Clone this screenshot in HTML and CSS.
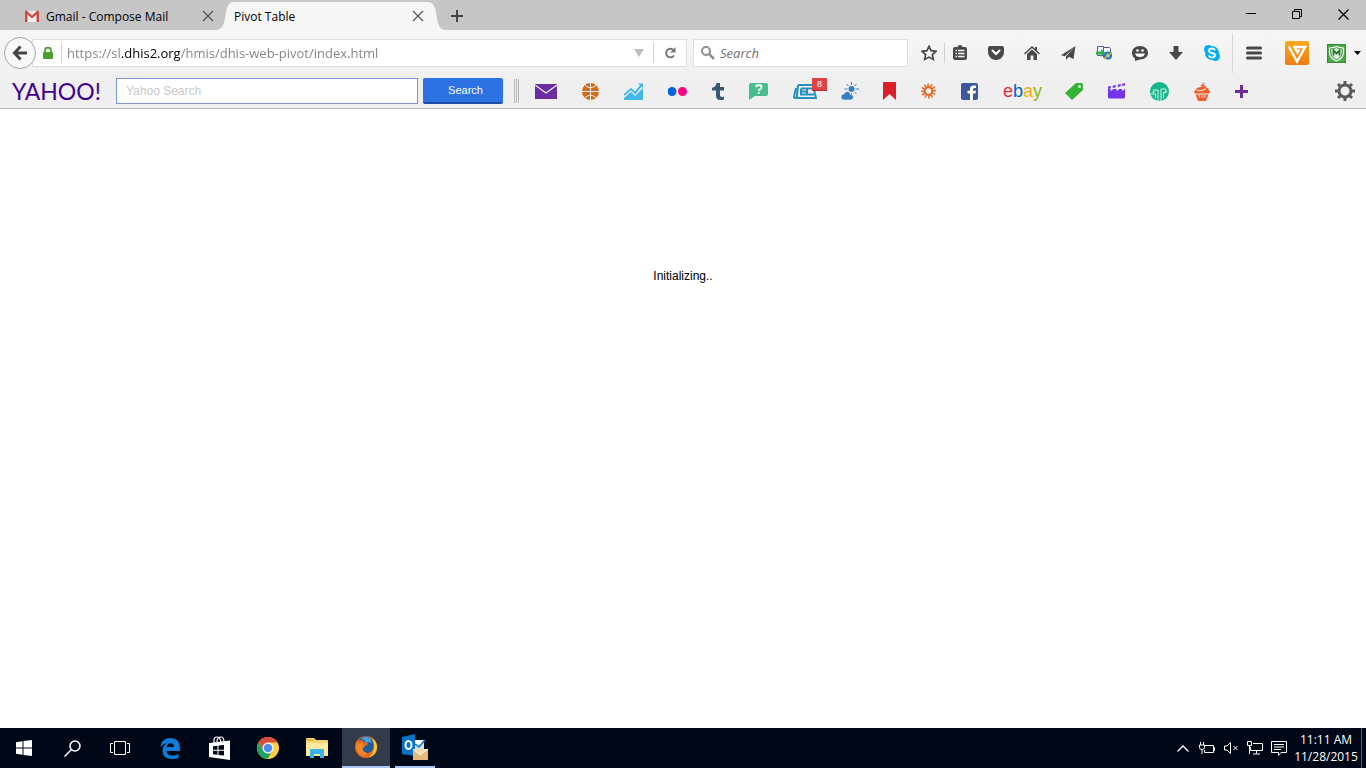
FILE: index.html
```html
<!DOCTYPE html>
<html lang="en">
<head>
    <meta charset="UTF-8">
    <meta name="viewport" content="width=device-width, initial-scale=1.0">
    <title>Pivot Table</title>
    <link rel="stylesheet" href="styles.css">
</head>
<body>
    <header class="browser">
        <div class="tab-strip">
            <div class="tab">
                <svg width="14" height="12" viewBox="0 0 14 12"><path d="M0 1h14v11H0z" fill="#f4eeee"/><path d="M0 1.500Q0 0 1.500 0.500L7 5.500 12.500 .5Q14 0 14 1.500V12h-2.500V4.500L7 8.500 2.500 4.500V12H0z" fill="#cf4b3f"/></svg>
                <button class="tab-title">Gmail - Compose Mail</button>
                <button class="close" aria-label="Close Gmail tab"><svg width="12" height="12" viewBox="0 0 12 12"><path d="M1 1l10 10M11 1L1 11" stroke="#555" stroke-width="1.200"/></svg></button>
            </div>
            <svg class="tab-edge" width="20" height="28" viewBox="0 0 20 28"><path d="M0 28C14 28 5 0 18 0h2V28z"/></svg>
            <div class="tab active">
                <button class="tab-title">Pivot Table</button>
                <button class="close" aria-label="Close Pivot Table tab"><svg width="12" height="12" viewBox="0 0 12 12"><path d="M1 1l10 10M11 1L1 11" stroke="#555" stroke-width="1.200"/></svg></button>
            </div>
            <svg class="tab-edge" width="20" height="28" viewBox="0 0 20 28"><path d="M20 28C6 28 15 0 2 0H0V28z"/></svg>
            <button class="new-tab" aria-label="New tab"><svg width="12" height="12" viewBox="0 0 12 12"><path d="M6 0v12M0 6h12" stroke="#444" stroke-width="2"/></svg></button>
            <div class="window-buttons">
                <button aria-label="Minimize"><svg width="10" height="10" viewBox="0 0 10 10"><path d="M0 4.500h10" stroke="#000"/></svg></button>
                <button aria-label="Restore"><svg width="11" height="11" viewBox="0 0 11 11" fill="none" stroke="#000"><path d="M.5 2.500h7v7h-7zM2.500 2.500v-2h7v7h-2"/></svg></button>
                <button aria-label="Close window"><svg width="11" height="11" viewBox="0 0 11 11"><path d="M.5.5l10 10M10.500.5l-10 10" stroke="#000" stroke-width="1.200"/></svg></button>
            </div>
        </div>

        <div class="nav-bar">
            <button class="back" aria-label="Back"><svg width="16" height="16" viewBox="0 0 16 16" fill="none" stroke="#444" stroke-width="3"><path d="M8.500 1.500L2.500 8l6 6.500M2.500 8H15"/></svg></button>
            <div class="url-box">
                <svg width="10" height="12" viewBox="0 0 10 12"><path d="M2 6V3.500a3 3 0 0 1 6 0V6" fill="none" stroke="#49a02c" stroke-width="1.800"/><rect y="5" width="10" height="7" rx="1" fill="#49a02c"/></svg>
                <input class="url" type="text" aria-label="Address" value="https://sl.dhis2.org/hmis/dhis-web-pivot/index.html">
                <button class="drop" aria-label="History"><svg width="10" height="8" viewBox="0 0 10 8"><path d="M0 0h10L5 8z" fill="#bdbdbd"/></svg></button>
                <button class="reload" aria-label="Reload"><svg width="12" height="12" viewBox="0 0 12 12"><path d="M9.500 3A4.300 4.300 0 1 0 10 8.500" fill="none" stroke="#777" stroke-width="2"/><path d="M11.500 0v5.500H6z" fill="#777"/></svg></button>
            </div>
            <div class="search-box">
                <svg width="14" height="14" viewBox="0 0 14 14" fill="none" stroke="#8f8f8f"><circle cx="5" cy="5" r="4" stroke-width="2"/><path d="M8 8l5 5" stroke-width="2.500"/></svg>
                <input type="text" placeholder="Search" aria-label="Search">
            </div>
            <div class="nav-icons">
                <button class="star" aria-label="Bookmark"><svg width="16" height="16" viewBox="0 0 16 16"><path d="M8 1.300l2.100 4.400 4.800.6-3.500 3.300.9 4.800L8 12.100l-4.300 2.300.9-4.800L1.100 6.300l4.800-.6z" fill="none" stroke="#484848" stroke-width="1.700"/></svg></button>
                <button aria-label="Bookmarks menu"><svg width="14" height="16" viewBox="0 0 14 16"><path d="M0 4q0-2 2-2h2.500q.5-2 2.500-2t2.500 2H12q2 0 2 2v9q0 2-2 2H2q-2 0-2-2z" fill="#484848"/><path d="M2.500 5.500h1.500M5 5.500h6.500M2.500 8.500h1.500M5 8.500h6.500M2.500 11.500h1.500M5 11.500h6.500" stroke="#f3f3f3" stroke-width="1.500"/></svg></button>
                <button aria-label="Pocket"><svg width="16" height="14" viewBox="0 0 16 14"><path d="M2 0h12q2 0 2 2v4a8 8 0 0 1-16 0V2q0-2 2-2z" fill="#484848"/><path d="M4.500 4.500L8 8l3.500-3.500" fill="none" stroke="#fff" stroke-width="2" stroke-linecap="round"/></svg></button>
                <button aria-label="Home"><svg width="16" height="14" viewBox="0 0 16 14" fill="#484848"><path d="M8 0l3 2.800V1h2v3.600l3 2.900-1 1L8 2 1 8.500l-1-1z"/><path d="M8 3.500l5 4.500v6H9.500V9.500h-3V14H3V8z"/></svg></button>
                <button aria-label="Send page"><svg width="15" height="14" viewBox="0 0 15 14" fill="#484848"><path d="M14.500 0L0 9.200l4 1zM14.500 0L5 10.500V14l2.200-2.600zM14.500 0L7 10.500l5.500 2.500z"/></svg></button>
                <button aria-label="Convert page"><svg width="17" height="14" viewBox="0 0 17 14"><path d="M1.500.5h6v9h-6z" fill="#eef5fb" stroke="#48617d"/><path d="M7.500 1.500h6l1 1v9h-7z" fill="#fff" stroke="#48617d"/><path d="M0 5.500h5V3l4.500 4L5 11V8.500H0z" fill="#35ad55"/><circle cx="12" cy="9.500" r="3" fill="#8cc6e8" stroke="#1978b5" stroke-width="2"/><path d="M8 13L16 6" stroke="#efb32d" stroke-width="1.300"/></svg></button>
                <button aria-label="Hello"><svg width="16" height="15" viewBox="0 0 16 15"><path d="M8 0c5 0 8 3 8 6.800S13 13.500 8 13.500L3 15v-2.500C1 11.500 0 9 0 6.800 0 3 3 0 8 0z" fill="#484848"/><circle cx="5.500" cy="4.500" r="1.300" fill="#fff"/><circle cx="10.500" cy="4.500" r="1.300" fill="#fff"/><path d="M3 7.500h10q-1 3.500-5 3.500T3 7.500z" fill="#fff"/></svg></button>
                <button aria-label="Downloads"><svg width="14" height="14" viewBox="0 0 14 14"><path d="M4.500 0h5v6H14l-7 8-7-8h4.500z" fill="#484848"/></svg></button>
                <button aria-label="Skype"><svg width="16" height="16" viewBox="0 0 16 16"><circle cx="8" cy="8" r="7" fill="#00aff0"/><circle cx="4.500" cy="4.500" r="4.500" fill="#00aff0"/><circle cx="11.500" cy="11.500" r="4.500" fill="#00aff0"/><path d="M11 5.300Q10 3.500 8 3.500 5 3.500 5 5.700 5 7.300 8 8t3 2.300q0 2.200-3 2.200-2.400 0-3.300-2" fill="none" stroke="#fff" stroke-width="1.800"/></svg></button>
                <button class="menu" aria-label="Menu"><svg width="16" height="14" viewBox="0 0 16 14"><path d="M1.500 2h13M1.500 7h13M1.500 12h13" stroke="#484848" stroke-width="3" stroke-linecap="round"/></svg></button>
            </div>
            <button class="vee" aria-label="Video extension"><svg width="24" height="24" viewBox="0 0 24 24"><defs><linearGradient id="orange" x2="0" y2="1"><stop stop-color="#fba91c"/><stop offset="1" stop-color="#ef7d13"/></linearGradient></defs><rect width="24" height="24" rx="2" fill="url(#orange)"/><path d="M3.800 5.500L12 20.500 20.200 6H9.500l3 5.500 1.800-3.200" fill="none" stroke="#fff" stroke-width="2.400"/></svg></button>
            <button class="shield" aria-label="Site advisor"><svg width="19" height="19" viewBox="0 0 19 19"><rect x=".5" y=".5" width="18" height="18" fill="#49a945" stroke="#358a38"/><path d="M2.500 4q4 0 7-1.500Q12.500 4 16.500 4v4q0 6-7 9-7-3-7-9z" fill="#3a963b" stroke="#fff" stroke-width="1.200"/><path d="M4.200 5.200q3 0 5.300-1.200 2.300 1.200 5.300 1.200V8q0 5-5.300 7.200Q4.200 13 4.200 8z" fill="#dff0dd"/><path d="M6.500 11.500V6.500l3 3 3-3v5" fill="none" stroke="#27772d" stroke-width="1.800"/></svg></button>
            <button aria-label="Site advisor menu"><svg width="7" height="4" viewBox="0 0 7 4"><path d="M0 0h7L3.500 4z"/></svg></button>
        </div>

        <div class="yahoo-bar">
            <a class="yahoo" href="#">YAHOO!</a>
            <form class="yahoo-form">
                <input type="text" placeholder="Yahoo Search" aria-label="Yahoo Search">
                <button type="button">Search</button>
            </form>
            <div class="grip"></div>
            <nav class="links">
                <a href="#" aria-label="Mail"><svg width="22" height="15" viewBox="0 0 22 15"><path d="M0 0h22v15H0z" fill="#6b2c9f"/><path d="M0 1l11 8 11-8" fill="none" stroke="#efefef" stroke-width="1.200"/></svg></a>
                <a href="#" aria-label="Sports"><svg width="17" height="17" viewBox="0 0 17 17"><circle cx="8.500" cy="8.500" r="8.500" fill="#d16d14"/><path d="M8.500 0v17M0 8.500h17M3 2.500q5.500 4.500 11 0M3 14.500q5.500-4.500 11 0" fill="none" stroke="#efefef"/></svg></a>
                <a href="#" aria-label="Finance"><svg width="19" height="17" viewBox="0 0 19 17"><path d="M0 17v-2l7-6 4 4 8-8v12z" fill="#43b7e8"/><path d="M0 12l7-6 4 4 7-8.500" fill="none" stroke="#43b7e8" stroke-width="2"/><path d="M14 .5h5V5z" fill="#43b7e8"/></svg></a>
                <a href="#" aria-label="Flickr"><svg width="19" height="17" viewBox="0 0 19 17"><circle cx="4" cy="8.500" r="4.500" fill="#0063dc"/><circle cx="14.500" cy="8.500" r="4.500" fill="#ff0084"/></svg></a>
                <a href="#" aria-label="Tumblr"><svg width="12" height="17" viewBox="0 0 12 17"><path d="M4.500 0H8v4h4v3.500H8v4.500q0 2 2 2 1 0 2-.6v3q-1.500.6-3.500.6-4.500 0-4.500-4.500v-5H0V4.800Q4 4 4.500 0z" fill="#3b5675"/></svg></a>
                <a href="#" aria-label="Answers"><svg width="19" height="17" viewBox="0 0 19 17"><path d="M2 0h15q2 0 2 2v9q0 2-2 2H6l-6 4V2q0-2 2-2z" fill="#46bf8b"/><path d="M7 4q.5-2 2.800-2 2.700 0 2.700 2.200 0 1.300-1.400 2Q9.800 6.800 9.800 8" fill="none" stroke="#fff" stroke-width="1.900"/><path d="M8.800 9h2v2h-2z" fill="#fff"/></svg></a>
                <a class="news" href="#" aria-label="News"><svg width="24" height="17" viewBox="0 0 24 17" fill="none" stroke="#2491bd" stroke-width="2"><path d="M5 2h15l3 13H2q-1 0-1-1L3 5M5 2L4 13q0 2-2 2M8 5.500h12M8 5.500v6h13M14 5.500v6M8 8.500h5"/></svg><span class="badge">8</span></a>
                <a class="weather" href="#" aria-label="Weather"><svg width="18" height="18" viewBox="0 0 18 18"><circle cx="10.500" cy="7" r="3" fill="#347fc2"/><path d="M10.500 0v3M10.500 11v3M3.500 7h3M14.500 7H18M5.500 2l2 2M13.500 4l2-2M13.500 10l2 2" stroke="#347fc2"/><path d="M3 18a3 3 0 0 1 0-6q1-3 4-2.500 2.500.5 2.500 3 3 0 3 2.500 0 3-3 3z" fill="#347fc2" stroke="#efefef" stroke-width=".7"/></svg></a>
                <a href="#" aria-label="Bookmarks"><svg width="13" height="18" viewBox="0 0 13 18"><path d="M0 0h13v18l-6.500-6L0 18z" fill="#dc1f2d"/></svg></a>
                <a href="#" aria-label="Horoscope"><svg width="15" height="16" viewBox="0 0 16 16"><circle cx="8" cy="8" r="4" fill="none" stroke="#e8641b" stroke-width="2"/><path d="M8 4q-1-2 0-4M10 5q0-3 2-4M12 6q1-2 3-2M12 8q2-1 4 0M11 10q3 0 4 2M10 12q2 1 2 3M8 12q1 2 0 4M6 11q0 3-2 4M4 10q-1 2-3 2M4 8q-2 1-4 0M5 6Q2 6 1 4M6 4Q4 3 4 1" fill="none" stroke="#e8641b" stroke-width="1.600"/></svg></a>
                <a href="#" aria-label="Facebook"><svg width="17" height="17" viewBox="0 0 17 17"><rect width="17" height="17" rx="2" fill="#3b579d"/><path d="M9 17v-6.500H6.500V7.800H9V6q0-3.500 3.500-3.500H15V5h-1.500q-1.500 0-1.500 1.500v1.300h3l-.4 2.700H12V17z" fill="#fff"/></svg></a>
                <a class="ebay" href="#"><span class="red">e</span><span class="blue">b</span><span class="yellow">a</span><span class="green">y</span></a>
                <a href="#" aria-label="Shopping"><svg width="18" height="17" viewBox="0 0 18 17"><path d="M11 0h5q2 0 2 2v5L7 17l-7-7z" fill="#33b233"/><circle cx="14.500" cy="3.500" r="1.500" fill="#efefef"/></svg></a>
                <a href="#" aria-label="Movies"><svg width="17" height="16" viewBox="0 0 17 16"><path d="M0 6h17v8q0 1-1 1.500H1Q0 15 0 14z" fill="#7434e8"/><path d="M0 3.500l3-.6-.5 2.500-2.500.5zM5 2.500L8 2 7.500 4.500 4.500 5zM10 1.500l3-.6-.5 2.500-3 .6zM14.500.5L17 0v2.500L14 3z" fill="#7434e8"/><path d="M3 6L2 7.500h2L5 6zM9 6L8 7.500h2L11 6zM14.500 6l-1 1.500h2l1-1.500z" fill="#efefef"/></svg></a>
                <a href="#" aria-label="Technology"><svg width="19" height="19" viewBox="0 0 19 19"><circle cx="9.500" cy="9.500" r="9.500" fill="#17b58c"/><path d="M8 19V8H3M11 19V7h5M5.500 16v-4H1M13.500 16v-5.500h3" fill="none" stroke="#d7f3eb"/><circle cx="3.500" cy="10" r="1" fill="#d7f3eb"/><circle cx="16" cy="9" r="1" fill="#d7f3eb"/></svg></a>
                <a href="#" aria-label="Food"><svg width="16" height="19" viewBox="0 0 16 19"><path d="M10 0q1 2-1 3 3 0 3 2.500 3 .5 3 3 1 0 1 1.500T14 11.500H2Q0 11.500 0 10t2-2q0-2 3-2.500l4-1.500H6Q8 3 10 0zM1.500 12.500h13L12 19H4z" fill="#f05e31"/><path d="M5 13l.5 2.500M8 13v2.500M11 13l-.5 2.500M3 8.500q6 1 9-2" fill="none" stroke="#efefef"/></svg></a>
                <a href="#" aria-label="Add"><svg width="13" height="13" viewBox="0 0 13 13"><path d="M6.500 0v13M0 6.500h13" stroke="#6b2c9f" stroke-width="3"/></svg></a>
            </nav>
            <button class="gear" aria-label="Settings"><svg width="20" height="20" viewBox="0 0 20 20" fill="none" stroke="#5a5a5a"><circle cx="10" cy="10" r="6" stroke-width="3"/><path d="M10 0v3.500M10 16.500V20M0 10h3.500M16.500 10H20M3 3l2.300 2.300M14.700 14.700L17 17M17 3l-2.300 2.300M5.300 14.700L3 17" stroke-width="3"/></svg></button>
        </div>
    </header>

    <main class="page">
        <p>Initializing..</p>
    </main>

    <footer class="taskbar">
        <div class="system">
            <button aria-label="Start"><svg width="16" height="16" viewBox="0 0 16 16" fill="#fff"><path d="M0 2.200l6.500-.9v6.200H0zM7.500 1.100L16 0v7.500H7.500zM0 8.500h6.500v6.200L0 13.800zM7.500 8.500H16V16l-8.500-1.100z"/></svg></button>
            <button aria-label="Search Windows"><svg width="17" height="17" viewBox="0 0 17 17" fill="none" stroke="#fff" stroke-width="1.500"><circle cx="11" cy="6" r="5"/><path d="M7.500 9.500L.5 16.500"/></svg></button>
            <button aria-label="Task view"><svg width="20" height="14" viewBox="0 0 20 14" fill="none" stroke="#fff"><path d="M4.500.5h11v13h-11zM3 2.500H.5v9H3M17 2.500h2.500v9H17"/></svg></button>
        </div>
        <div class="apps">
            <button aria-label="Edge"><svg width="20" height="21" viewBox="0 0 20 21"><path d="M0 9.500Q1.500 0 10.500 0 20 0 20 10.500V13H6.500q.5 4.500 6 4.500 3.500 0 6-1.500v4Q16 21 12 21 2.500 21 2.500 12.500 2.500 8 7 5 3 5.500 0 9.500zM6.700 9H14q0-3.800-3.500-3.800Q7.300 5.200 6.700 9z" fill="#0f7dd8"/></svg></button>
            <button aria-label="Store"><svg width="21" height="24" viewBox="0 0 21 24"><path d="M5 7V4q0-3 3-3t4 5M8 6q0-5 4-5 3 0 3 5" fill="none" stroke="#fff" stroke-width="1.200"/><path d="M0 7l21-2.500V24L0 21z" fill="#fff"/><path d="M4 10.200l4.500-.5v4H4zM9.500 9.600l5.500-.6v4.700H9.500zM4 14.700h4.500v4L4 18.200zM9.500 14.700H15v4.800l-5.500-.6z" fill="#000717"/></svg></button>
            <button aria-label="Chrome"><svg width="22" height="22" viewBox="0 0 22 22"><circle cx="11" cy="11" r="11" fill="#ffcd40"/><path d="M1.500 5.500A11 11 0 0 1 20.500 5.500H11L6.500 13.500z" fill="#dc4a3d"/><path d="M1.500 5.500A11 11 0 0 0 10.500 22L15.500 13.500H6.500z" fill="#1da362"/><circle cx="11" cy="11" r="5.500" fill="#fff"/><circle cx="11" cy="11" r="4.300" fill="#4c8bf5"/></svg></button>
            <button aria-label="File Explorer"><svg width="22" height="20" viewBox="0 0 22 20"><path d="M0 1q0-1 1-1h7l2 2h11q1 0 1 1v15H0z" fill="#f7d774"/><path d="M0 5h22v13H0z" fill="#ffe8a0"/><path d="M1 2h6" stroke="#d99b2b"/><path d="M4 20v-9h14v9h-4v-4H8v4z" fill="#35b5e9"/></svg></button>
            <button class="current" aria-label="Firefox"><svg width="22" height="22" viewBox="0 0 22 22"><circle cx="11" cy="11" r="11" fill="#ea6a1b"/><path d="M16 1.500Q22 5 22 11q0 8-8 10.500 5-5 5-10 0-6-3-10z" fill="#fbc62c"/><path d="M4.500 3Q10-2 16 2q3 4 2.500 9-.5 5-5.500 6-5 0-6-4-1-2 1-3l4-.5 1-2-4-1.500-2-2-3 .5z" fill="#1e5a9c"/><path d="M6 2.500Q11-1 15.500 2.500L17 7l-3-1-3 1-2-3z" fill="#4ba0d0"/><path d="M2 4q0 3 1 4l3-1 4 3-2 2q-1 4 4 5l-2 3Q3 19 1 12z" fill="#f1852a"/></svg></button>
            <button class="open" aria-label="Outlook"><svg width="27" height="27" viewBox="0 0 27 27"><path d="M13 6h9v11h-9z" fill="#fff"/><path d="M13 8l4 4 5-6v11h-9z" fill="#cfe3f4"/><path d="M13 10l4 3 6-7" fill="none" stroke="#0873c4" stroke-width="1.500"/><path d="M0 3l13-3v22L0 20z" fill="#0873c4"/><ellipse cx="6.500" cy="11" rx="3" ry="4" fill="none" stroke="#fff" stroke-width="2"/><path d="M11 15h15v11H11z" fill="#e9b77c"/><path d="M11 15l7.500 6 7.500-6" fill="#f6d6aa" stroke="#fff"/></svg></button>
        </div>
        <div class="tray">
            <button aria-label="Show hidden icons"><svg width="12" height="7" viewBox="0 0 12 7"><path d="M.5 6.500L6 1l5.500 5.500" fill="none" stroke="#fff" stroke-width="1.300"/></svg></button>
            <button aria-label="Battery"><svg width="16" height="12" viewBox="0 0 16 12" fill="none" stroke="#fff"><path d="M6 3.500h8.500v7h-9V8M14.500 5.500h1v3h-1M.5 3h5v2.500q0 2-2.500 2T.5 5.500zM1.500 3V0M4.500 3V0M3 7.500V12"/></svg></button>
            <button aria-label="Volume muted"><svg width="15" height="12" viewBox="0 0 15 12" fill="none" stroke="#fff"><path d="M.5 4h2.500L6.500.5v11L3 8H.5zM9.500 4l4 4M13.500 4l-4 4"/></svg></button>
            <button aria-label="Network"><svg width="16" height="14" viewBox="0 0 16 14" fill="none" stroke="#fff"><path d="M6 2.500h9.500v7H3.500V6M9.500 9.500v3M6 13h7M.5.5h4v4h-4zM2.500 4.500V13"/></svg></button>
            <button aria-label="Notifications"><svg width="16" height="15" viewBox="0 0 16 15" fill="none" stroke="#fff"><path d="M.5.5h15v11H10l-2.500 3v-3h-7zM3 3.500h10M3 6h10M3 8.500h7"/></svg></button>
            <button class="clock">11:11 AM<br>11/28/2015</button>
        </div>
    </footer>
</body>
</html>
```

FILE: styles.css
```css
* {
    box-sizing: border-box;
}
body {
    margin: 0;
    min-height: 100vh;
    display: flex;
    flex-direction: column;
    background-color: white;
    font-family: "Open Sans", "Noto Sans", sans-serif;
    font-size: 12px;
}
button {
    display: flex;
    align-items: center;
    justify-content: center;
    padding: 0;
    border: none;
    background: none;
    font: inherit;
    color: inherit;
}
input {
    min-width: 0;
    padding: 0;
    border: none;
    outline: none;
    background: none;
    font: inherit;
}
a {
    color: inherit;
    text-decoration: none;
}
svg {
    display: block;
    flex-shrink: 0;
}

/* Tabs */
.tab-strip {
    display: flex;
    align-items: flex-end;
    height: 30px;
    background-color: #c6c6c6;
}
.tab {
    display: flex;
    align-items: center;
    width: 216px;
    height: 28px;
    padding-left: 25px;
}
.tab .tab-title {
    flex: 1;
    justify-content: flex-start;
    margin-left: 7px;
    white-space: nowrap;
}
.tab .close {
    margin-right: 2px;
}
.tab.active {
    width: 192px;
    margin-left: -2px;
    padding-left: 0;
    background-color: #f6f6f6;
}
.tab.active .tab-title {
    margin-left: 0;
}
.tab-edge {
    fill: #f6f6f6;
}
.new-tab {
    width: 22px;
    height: 28px;
}
.window-buttons {
    display: flex;
    align-self: stretch;
    margin-left: auto;
}
.window-buttons button {
    width: 46px;
    height: 28px;
}

/* Address bar */
.nav-bar {
    display: flex;
    align-items: center;
    height: 46px;
    padding: 0 5px 0 4px;
    background-color: #f3f3f3;
    background-image: linear-gradient(#f6f6f6, #f0f0f0);
}
.back {
    z-index: 1;
    width: 32px;
    height: 32px;
    border: 1px solid #a5a5a5;
    border-radius: 50%;
    background-color: #f8f8f8;
}
.url-box,
.search-box {
    display: flex;
    align-items: center;
    height: 28px;
    border: 1px solid #e0e0e0;
    background-color: white;
    font-size: 13px;
}
.url-box {
    flex: 1;
    margin: 0 6px 0 -4px;
    padding-left: 10px;
}
/* The domain is darker than the rest of the address */
.url {
    flex: 1;
    height: 20px;
    margin-left: 8px;
    padding-left: 5px;
    border-left: 1px solid #d0d0d0;
    background-image: linear-gradient(to right, #808080 60px, #000 60px, #000 119px, #808080 119px);
    -webkit-background-clip: text;
    background-clip: text;
    color: transparent;
}
.drop {
    width: 28px;
}
.reload {
    width: 33px;
    height: 20px;
    border-left: 1px solid #d0d0d0;
}
.search-box {
    width: 215px;
    gap: 5px;
    padding-left: 7px;
}
.search-box input {
    flex: 1;
    font-style: italic;
}
.search-box input::placeholder {
    color: #707070;
}
.nav-icons {
    display: flex;
    align-items: center;
    margin-left: 5px;
}
.nav-icons button {
    width: 36px;
    height: 20px;
}
.nav-icons .star {
    width: 32px;
    margin-right: -3px;
    border-right: 1px solid #ccd2d8;
}
.nav-icons .menu {
    width: 42px;
    height: 40px;
    margin-left: 2px;
    border-left: 1px solid #d8d8d8;
}
.vee {
    margin: 0 18px 0 11px;
}
.shield {
    margin-right: 8px;
}

/* Yahoo toolbar */
.yahoo-bar {
    display: flex;
    align-items: center;
    height: 33px;
    padding: 0 11px 2px 12px;
    border-bottom: 1px solid #b8b8b8;
    background-color: #efefef;
    font-family: "Liberation Sans", Arial, sans-serif;
}
.yahoo {
    width: 104px;
    color: #400090;
    font-family: Lato, sans-serif;
    font-size: 23px;
    line-height: 28px;
}
.yahoo-form {
    display: flex;
    gap: 5px;
}
.yahoo-form input {
    width: 302px;
    height: 26px;
    padding-left: 9px;
    border: 1px solid #7b93d4;
    background-color: white;
}
.yahoo-form input::placeholder {
    color: #c8c8c8;
}
.yahoo-form button {
    width: 80px;
    height: 26px;
    padding-left: 5px;
    border-bottom: 2px solid #1d4fa8;
    border-radius: 2px;
    background-color: #2d72e2;
    color: white;
    font-size: 11px;
}
.grip {
    width: 5px;
    height: 24px;
    margin: 0 16px 0 11px;
    border: 1px solid #b8b8b8;
    border-width: 0 1px;
    background: linear-gradient(to right, transparent 1px, #b8b8b8 1px, #b8b8b8 2px, transparent 2px);
}
.links {
    display: flex;
    align-items: center;
    gap: 25px;
}
.news {
    position: relative;
}
.weather {
    margin: 0 -1px;
}
.badge {
    position: absolute;
    top: -5px;
    left: 19px;
    width: 15px;
    height: 13px;
    border-bottom: 1px solid #b52c2c;
    background-color: #e04343;
    color: white;
    font-size: 9px;
    line-height: 12px;
    text-align: center;
}
.ebay {
    width: 37px;
    font-size: 18px;
    line-height: 20px;
}
.red {
    color: #e53238;
}
.blue {
    color: #0064d2;
}
.yellow {
    color: #f5af02;
}
.green {
    color: #86b817;
}
.gear {
    margin-left: auto;
}

/* Page */
.page {
    flex: 1;
    padding-top: 160px;
    font-family: "Liberation Sans", Arial, sans-serif;
    text-align: center;
}
.page p {
    margin: 0;
    line-height: 14px;
}

/* Taskbar */
.taskbar {
    display: flex;
    height: 40px;
    background-color: #000717;
    color: white;
}
.system,
.apps,
.tray {
    display: flex;
}
.apps {
    gap: 1px;
    margin-left: 2px;
}
.system button,
.apps button {
    width: 48px;
    height: 40px;
}
.apps .current {
    border-bottom: 2px solid #a9c9f2;
    background-color: #333b4a;
}
.apps .open {
    width: 40px;
    margin-left: 4px;
    border-bottom: 2px solid #a9c9f2;
}
.tray {
    align-items: center;
    margin-left: auto;
    padding-right: 4px;
}
.tray button {
    width: 24px;
    height: 40px;
}
.tray .clock {
    width: 71px;
    border-right: 1px solid #5b6270;
    line-height: 17px;
    white-space: nowrap;
}
```
